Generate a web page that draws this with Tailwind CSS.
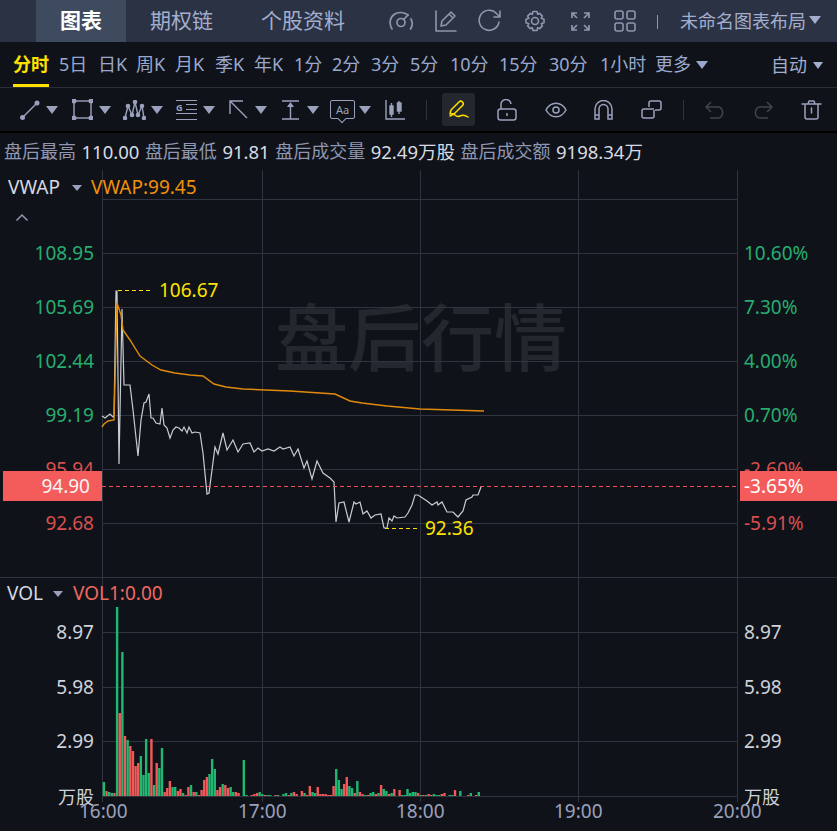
<!DOCTYPE html>
<html lang="zh">
<head>
  <meta charset="UTF-8">
  <title>分时图</title>
  <script src="https://cdn.jsdelivr.net/npm/@tailwindcss/browser@4"></script>
</head>
<body class="w-[837px] h-[831px] overflow-hidden bg-[#0f1319] text-[18px] font-['Noto_Sans','Noto_Sans_CJK_SC',sans-serif]">
  <!-- top tabs -->
  <header class="h-[42px] bg-[#2b3244] flex items-center pl-[36px] text-[#a3aecd] text-[21px]">
    <div class="w-[90px] h-full bg-[#3e4b5f] flex items-center justify-center font-bold text-white">图表</div>
    <div class="ml-[24px] w-[63px] whitespace-nowrap">期权链</div>
    <div class="ml-[48px] w-[84px] whitespace-nowrap">个股资料</div>
    <div class="ml-[43px] flex items-center text-[#8d96ae]">
      <svg width="26" height="20" viewBox="0 0 26 20" fill="none" stroke="currentColor" stroke-width="1.7" stroke-linecap="round"><path d="M4 18C1 13 1.5 7 6 3.5 10 .5 16 1 20 4M23 8c1.800 3.500 1.500 7-.5 10"/><circle cx="13" cy="11.500" r="4"/><path d="M15.500 8.500 20 4"/></svg>
      <svg class="ml-[20px]" width="24" height="24" viewBox="0 0 24 24" fill="none" stroke="currentColor" stroke-width="1.600" stroke-linecap="round" stroke-linejoin="round"><path d="M2 2v20h20"/><path d="M7 17l1-5L17 3l4 4-9 9-5 1zM15 5l4 4"/></svg>
      <svg class="ml-[20px]" width="24" height="24" viewBox="0 0 24 24" fill="none" stroke="currentColor" stroke-width="1.600" stroke-linecap="round" stroke-linejoin="round"><path d="M21 13a10 10 0 1 1-2.500-8.500L22 8M22 2v6h-6" /></svg>
      <svg class="ml-[22px]" width="22" height="22" viewBox="0 0 22 22" fill="none" stroke="currentColor" stroke-width="1.600" stroke-linejoin="round"><path d="M9 1.500h4l.7 2.800 2-.9 2.700 2.700-1.200 2.200 2.800 1v3.400l-2.800 1 1.200 2.200-2.700 2.700-2-.9-.7 2.800H9l-.7-2.800-2 .9-2.700-2.700 1.200-2.200-2.800-1V9.300l2.800-1-1.200-2.200 2.700-2.700 2 .9z"/><circle cx="11" cy="11" r="3.500"/></svg>
      <svg class="ml-[25px]" width="19" height="19" viewBox="0 0 19 19" fill="none" stroke="currentColor" stroke-width="1.700"><path d="M1 6V1h5M1 1l5 5M13 1h5v5M18 1l-5 5M1 13v5h5M1 18l5-5M18 13v5h-5M18 18l-5-5"/></svg>
      <svg class="ml-[24px]" width="22" height="22" viewBox="0 0 22 22" fill="none" stroke="currentColor" stroke-width="1.600"><rect x="1" y="1" width="8" height="8" rx="2"/><rect x="13" y="1" width="8" height="8" rx="2"/><rect x="1" y="13" width="8" height="8" rx="2"/><rect x="13" y="13" width="8" height="8" rx="2"/></svg>
    </div>
    <div class="ml-[21px] w-px h-[14px] bg-[#8d96ae] mt-[1px]"></div>
    <div class="ml-[22px] text-[18px] whitespace-nowrap">未命名图表布局</div>
    <div class="ml-[3px] mt-[-2px] w-0 h-0 border-x-[6px] border-x-transparent border-t-[8px] border-t-[#a3aecd]"></div>
  </header>

  <!-- period row -->
  <nav class="h-[46px] pl-[13px] pr-[14px] flex items-center border-b border-[#2a2e36] text-[#9aa8cf] whitespace-nowrap">
    <div class="relative h-full w-[36px] flex items-center font-bold text-[#ffe100]">分时<div class="absolute left-0 right-0 bottom-0 h-[3px] bg-[#ffe100]"></div></div>
    <div class="ml-[10px] w-[29px]">5日</div>
    <div class="ml-[10px] w-[28px]">日K</div>
    <div class="ml-[10px] w-[29px]">周K</div>
    <div class="ml-[10px] w-[29px]">月K</div>
    <div class="ml-[11px] w-[29px]">季K</div>
    <div class="ml-[10px] w-[29px]">年K</div>
    <div class="ml-[11px] w-[28px]">1分</div>
    <div class="ml-[10px] w-[29px]">2分</div>
    <div class="ml-[10px] w-[29px]">3分</div>
    <div class="ml-[10px] w-[29px]">5分</div>
    <div class="ml-[11px] w-[39px]">10分</div>
    <div class="ml-[10px] w-[39px]">15分</div>
    <div class="ml-[11px] w-[39px]">30分</div>
    <div class="ml-[12px] w-[45px]">1小时</div>
    <div class="ml-[10px] w-[36px]">更多</div>
    <div class="ml-[5px] w-0 h-0 border-x-[6.500px] border-x-transparent border-t-[8px] border-t-[#9aa8cf]"></div>
    <div class="ml-auto mt-[2px] flex items-center text-[#a3aecd]">自动<div class="ml-[6px] w-0 h-0 border-x-[5px] border-x-transparent border-t-[7px] border-t-[#a3aecd]"></div></div>
  </nav>

  <!-- drawing tools -->
  <div class="h-[43px] flex items-center pl-[20px] text-[#9ba1bd]">
    <svg width="20" height="20" viewBox="0 0 20 20" fill="none" stroke="currentColor" stroke-width="1.400"><path d="M3 17 17 3"/><circle cx="2.500" cy="17.500" r="1.800" fill="currentColor"/><circle cx="17" cy="3" r="1.800" fill="currentColor"/></svg>
    <div class="ml-[6px] w-0 h-0 border-x-[6px] border-x-transparent border-t-[8px] border-t-[#9ba1bd]"></div>
    <svg class="ml-[14px]" width="21" height="21" viewBox="0 0 21 21" fill="none" stroke="currentColor" stroke-width="1.400"><rect x="2" y="2" width="17" height="17"/><g fill="currentColor"><circle cx="2" cy="2" r="1.800"/><circle cx="19" cy="2" r="1.800"/><circle cx="2" cy="19" r="1.800"/><circle cx="19" cy="19" r="1.800"/></g></svg>
    <div class="ml-[6px] w-0 h-0 border-x-[6px] border-x-transparent border-t-[8px] border-t-[#9ba1bd]"></div>
    <svg class="ml-[12px]" width="23" height="20" viewBox="0 0 23 20" fill="none" stroke="currentColor" stroke-width="1.400"><path d="M2 18 5 6l4 9 3-13 3 13 4-9 2 12"/><g fill="currentColor"><circle cx="2" cy="18" r="1.600"/><circle cx="5" cy="6" r="1.600"/><circle cx="9" cy="15" r="1.600"/><circle cx="12" cy="2" r="1.600"/><circle cx="15" cy="15" r="1.600"/><circle cx="19" cy="6" r="1.600"/><circle cx="21" cy="18" r="1.600"/></g></svg>
    <div class="ml-[5px] w-0 h-0 border-x-[6px] border-x-transparent border-t-[8px] border-t-[#9ba1bd]"></div>
    <div class="ml-[13px] w-[21px] h-[20px] relative border-y-[1.500px] border-[#9ba1bd]">
      <div class="absolute left-0 top-[12px] w-full h-[1.500px] bg-[#9ba1bd]"></div>
      <div class="absolute right-0 top-[3px] w-[11px] h-[1.500px] bg-[#9ba1bd]"></div>
      <div class="absolute right-0 top-[8px] w-[11px] h-[1.500px] bg-[#9ba1bd]"></div>
      <div class="absolute left-0 top-[1px] text-[9px] leading-[11px] font-bold">G</div>
    </div>
    <div class="ml-[6px] w-0 h-0 border-x-[6px] border-x-transparent border-t-[8px] border-t-[#9ba1bd]"></div>
    <svg class="ml-[14px]" width="19" height="19" viewBox="0 0 19 19" fill="none" stroke="currentColor" stroke-width="1.400"><path d="M1 14V1h13M1 1l17 17"/></svg>
    <div class="ml-[7px] w-0 h-0 border-x-[6px] border-x-transparent border-t-[8px] border-t-[#9ba1bd]"></div>
    <svg class="ml-[14px]" width="19" height="20" viewBox="0 0 19 20" fill="none" stroke="currentColor" stroke-width="1.400"><path d="M1 1h17M1 19h17M9.500 5v14"/><path d="M9.500 2 13 7H6z" fill="currentColor" stroke="none"/></svg>
    <div class="ml-[7px] w-0 h-0 border-x-[6px] border-x-transparent border-t-[8px] border-t-[#9ba1bd]"></div>
    <div class="ml-[11px] relative w-[25px] h-[19px] border-[1.400px] border-[#9ba1bd] rounded-[2px] flex items-center justify-center text-[11px] leading-none">Aa<div class="absolute left-[8px] bottom-[-4px] w-[6px] h-[6px] rotate-45 bg-[#0f1319] border-r-[1.400px] border-b-[1.400px] border-[#9ba1bd]"></div></div>
    <div class="ml-[4px] w-0 h-0 border-x-[6px] border-x-transparent border-t-[8px] border-t-[#9ba1bd]"></div>
    <svg class="ml-[14px]" width="20" height="20" viewBox="0 0 20 20" fill="none" stroke="currentColor" stroke-width="1.400"><path d="M1 0v19h19"/><rect x="5" y="6" width="3" height="8" fill="currentColor"/><path d="M6.500 3v14M14 1v13"/><rect x="12.500" y="3" width="3.500" height="8" fill="currentColor"/></svg>
    <div class="ml-[21px] w-px h-[20px] bg-[#2f333b]"></div>
    <div class="ml-[15px] w-[33px] h-[33px] rounded-[3px] bg-[#24272d] flex items-center justify-center text-[#ffe100]">
      <svg width="22" height="20" viewBox="0 0 22 20" fill="none" stroke="currentColor" stroke-width="1.500" stroke-linecap="round" stroke-linejoin="round"><path d="M2 14 3 10l8-8c1-1 2.500-1 3.500 0s1 2.500 0 3.500L6.500 13.500z"/><path d="M2 16c2-1 4-2 5-1s3 2 5 1 5-1 8 1"/></svg>
    </div>
    <svg class="ml-[22px]" width="20" height="22" viewBox="0 0 20 22" fill="none" stroke="currentColor" stroke-width="1.500"><path d="M4 10V6a5 5 0 0 1 10-1"/><rect x="1" y="10" width="18" height="11" rx="2.500"/><path d="M10 14v3"/></svg>
    <svg class="ml-[28px]" width="22" height="16" viewBox="0 0 22 16" fill="none" stroke="currentColor" stroke-width="1.500"><path d="M1 8c5-9 15-9 20 0-5 9-15 9-20 0z"/><circle cx="11" cy="8" r="3"/></svg>
    <svg class="ml-[27px]" width="19" height="20" viewBox="0 0 19 20" fill="none" stroke="currentColor" stroke-width="1.500"><path d="M1 19V9a8.500 8.500 0 0 1 17 0v10h-4V9a4.500 4.500 0 0 0-9 0v10zM1 15h4M14 15h4"/></svg>
    <svg class="ml-[28px]" width="21" height="20" viewBox="0 0 21 20" fill="none" stroke="currentColor" stroke-width="1.500"><path d="M8 7V3a2 2 0 0 1 2-2h8a2 2 0 0 1 2 2v5a2 2 0 0 1-2 2h-4"/><path d="M13 10v6a2 2 0 0 1-2 2H3a2 2 0 0 1-2-2v-5a2 2 0 0 1 2-2h4"/><path d="M7 9h6"/></svg>
    <div class="ml-[21px] w-px h-[20px] bg-[#2f333b]"></div>
    <svg class="ml-[21px] text-[#3f444d]" width="21" height="18" viewBox="0 0 21 18" fill="none" stroke="currentColor" stroke-width="1.500"><path d="M6 1 1 6l5 5M1 6h13a6 6 0 0 1 0 11H5"/></svg>
    <svg class="ml-[26px] text-[#3f444d]" width="21" height="18" viewBox="0 0 21 18" fill="none" stroke="currentColor" stroke-width="1.500"><path d="m15 1 5 5-5 5M20 6H7a6 6 0 0 0 0 11h9"/></svg>
    <svg class="ml-[28px]" width="21" height="20" viewBox="0 0 21 20" fill="none" stroke="currentColor" stroke-width="1.500" stroke-linecap="round" stroke-linejoin="round"><path d="M1 4h19M7 4l1-3h5l1 3M4 4v13a2 2 0 0 0 2 2h9a2 2 0 0 0 2-2V4M10.500 8v5"/></svg>
  </div>
  <div class="h-[2px] bg-black"></div>

  <!-- after-hours summary -->
  <div class="h-[37px] pl-[4px] flex items-center whitespace-nowrap text-[#8f97b3]">
    <span>盘后最高</span><span class="ml-[5.500px] text-[18.500px] text-[#d9dbe2]">110.00</span>
    <span class="ml-[5.500px]">盘后最低</span><span class="ml-[5.500px] text-[18.500px] text-[#d9dbe2]">91.81</span>
    <span class="ml-[5.500px]">盘后成交量</span><span class="ml-[5.500px] text-[18.500px] text-[#d9dbe2]">92.49万股</span>
    <span class="ml-[5.500px]">盘后成交额</span><span class="ml-[5.500px] text-[18.500px] text-[#d9dbe2]">9198.34万</span>
  </div>

  <!-- chart canvas -->
  <div class="relative h-[661px] leading-none whitespace-nowrap text-[19px]">
    <div class="absolute left-[275px] top-[130px] text-[73px] font-medium text-[#24272d]">盘后行情</div>
    <svg id="chart" class="absolute inset-0" width="837" height="661" viewBox="0 170 837 661" fill="none"></svg>

    <div class="absolute left-[8px] top-[7px] text-[#d5d8e0] h-[20px] leading-[20px]">VWAP</div>
    <div class="absolute left-[72px] top-[15px] w-0 h-0 border-x-[5px] border-x-transparent border-t-[6px] border-t-[#9ba1bd]"></div>
    <div class="absolute left-[91px] top-[7px] text-[#f0900a] h-[20px] leading-[20px]">VWAP:99.45</div>
    <svg class="absolute left-[15px] top-[43px] text-[#8f97b3]" width="14" height="9" viewBox="0 0 14 9" fill="none" stroke="currentColor" stroke-width="1.500"><path d="m1.500 7.500 5.500-5.500 5.500 5.500"/></svg>

    <div class="absolute right-[743px] top-[73px] h-[20px] leading-[20px] text-[#27ad70]">108.95</div>
    <div class="absolute right-[743px] top-[127px] h-[20px] leading-[20px] text-[#27ad70]">105.69</div>
    <div class="absolute right-[743px] top-[181px] h-[20px] leading-[20px] text-[#27ad70]">102.44</div>
    <div class="absolute right-[743px] top-[235px] h-[20px] leading-[20px] text-[#27ad70]">99.19</div>
    <div class="absolute right-[743px] top-[289px] h-[20px] leading-[20px] text-[#d94f4f]">95.94</div>
    <div class="absolute right-[743px] top-[343px] h-[20px] leading-[20px] text-[#d94f4f]">92.68</div>

    <div class="absolute left-[744px] top-[73px] h-[20px] leading-[20px] text-[#27ad70]">10.60%</div>
    <div class="absolute left-[744px] top-[127px] h-[20px] leading-[20px] text-[#27ad70]">7.30%</div>
    <div class="absolute left-[744px] top-[181px] h-[20px] leading-[20px] text-[#27ad70]">4.00%</div>
    <div class="absolute left-[744px] top-[235px] h-[20px] leading-[20px] text-[#27ad70]">0.70%</div>
    <div class="absolute left-[744px] top-[289px] h-[20px] leading-[20px] text-[#d94f4f]">-2.60%</div>
    <div class="absolute left-[744px] top-[343px] h-[20px] leading-[20px] text-[#d94f4f]">-5.91%</div>

    <div class="absolute left-[3px] top-[301px] w-[99px] h-[30px] bg-[#f45b5b] text-[#f4f4f4] flex items-center justify-end pr-[12px]">94.90</div>
    <div class="absolute left-[740px] top-[301px] w-[97px] h-[30px] bg-[#f45b5b] text-white flex items-center pl-[4px]">-3.65%</div>

    <div class="absolute left-[159px] top-[110px] h-[20px] leading-[20px] text-[#ffe100]">106.67</div>
    <div class="absolute left-[425px] top-[348px] h-[20px] leading-[20px] text-[#ffe100]">92.36</div>

    <div class="absolute left-[7px] top-[413px] h-[20px] leading-[20px] text-[#d5d8e0]">VOL</div>
    <div class="absolute left-[53px] top-[421px] w-0 h-0 border-x-[5px] border-x-transparent border-t-[6px] border-t-[#9ba1bd]"></div>
    <div class="absolute left-[73px] top-[413px] h-[20px] leading-[20px] text-[#f0685f]">VOL1:0.00</div>

    <div class="absolute right-[743px] top-[452px] h-[20px] leading-[20px] text-[#cfd2da]">8.97</div>
    <div class="absolute right-[743px] top-[507px] h-[20px] leading-[20px] text-[#cfd2da]">5.98</div>
    <div class="absolute right-[743px] top-[561px] h-[20px] leading-[20px] text-[#cfd2da]">2.99</div>
    <div class="absolute right-[743px] top-[617px] h-[20px] leading-[20px] text-[18px] text-[#cfd2da]">万股</div>
    <div class="absolute left-[744px] top-[452px] h-[20px] leading-[20px] text-[#cfd2da]">8.97</div>
    <div class="absolute left-[744px] top-[507px] h-[20px] leading-[20px] text-[#cfd2da]">5.98</div>
    <div class="absolute left-[744px] top-[561px] h-[20px] leading-[20px] text-[#cfd2da]">2.99</div>
    <div class="absolute left-[744px] top-[617px] h-[20px] leading-[20px] text-[18px] text-[#cfd2da]">万股</div>

    <div class="absolute left-[79px] top-[631px] h-[20px] leading-[20px] text-[#9ba1bd]">16:00</div>
    <div class="absolute left-[238px] top-[631px] h-[20px] leading-[20px] text-[#9ba1bd]">17:00</div>
    <div class="absolute left-[396px] top-[631px] h-[20px] leading-[20px] text-[#9ba1bd]">18:00</div>
    <div class="absolute left-[554px] top-[631px] h-[20px] leading-[20px] text-[#9ba1bd]">19:00</div>
    <div class="absolute left-[713px] top-[631px] h-[20px] leading-[20px] text-[#9ba1bd]">20:00</div>
  </div>

  <script>
    // series read off the chart, pixel coordinates
    const price = [102,416,105,418,110,414,113,417,114,416,116,291,117,291,119,464,122,309,124,385,130,385,133,410,138,456,141,420,144,403,146,402,149,394,151,418,153,418,156,423,160,424,162,408,164,425,167,428,170,438,173,430,176,427,179,428,182,431,184,427,187,433,189,427,192,433,195,432,200,433,203,453,207,494,209,493,215,447,218,454,223,433,227,450,233,440,238,452,243,444,250,443,254,452,258,448,262,451,268,449,274,451,280,447,283,449,290,447,294,456,298,449,304,468,307,461,312,479,317,461,323,473,330,478,334,482,336,522,339,503,344,502,349,522,354,502,356,504,360,502,363,514,367,511,371,518,375,515,381,514,384,528,387,528,389,518,392,521,394,516,397,518,405,517,408,513,412,505,415,495,418,495,427,501,432,505,437,502,438,505,442,502,447,512,453,512,458,517,463,511,466,500,472,497,473,495,478,495,481,487];
    const vwap = [102,427,104,424,108,421,114,420,117,303,121,315,123,330,130,340,140,356,148,362,152,365,161,370,175,373,190,375,203,376,214,384,226,387,243,389,290,391,335,394,350,401,362,403,387,406,420,409,484,411];
    // volume per minute, negative = red bar
    const vol = [14,-5,4,3,-3,189,-83,144,-60,56,-50,-45,-30,-33,40,21,57,23,-57,11,-33,28,48,-4,-8,-15,9,9,-5,-7,3,-1,-9,11,-4,4,-1,-6,-16,-19,22,37,27,-6,-9,12,-11,-8,9,4,-4,-3,0,36,1,0,-1,-2,-3,4,2,-1,1,1,0,-1,1,0,2,3,-1,3,-4,-2,0,-5,3,-1,-10,4,3,-9,-2,-2,-2,-1,-1,-10,27,16,7,-12,-19,10,8,-3,15,-4,-2,1,-1,3,4,-2,3,-11,7,5,-2,3,-7,0,-6,1,1,7,3,4,4,-3,1,-1,1,-2,-1,2,1,1,-2,-3,0,1,1,-6,0,5,0,0,-1,3,0,-1,4];

    const svg = document.getElementById('chart');
    let html = '';
    const line = (x1, y1, x2, y2, c, extra = '') => `<line x1="${x1}" y1="${y1}" x2="${x2}" y2="${y2}" stroke="${c}" ${extra}/>`;
    for (const y of [199.5, 253.5, 307.5, 361.5, 415.5, 469.5, 523.5, 632.5, 687.5, 741.5, 796.5]) html += line(102, y, 737, y, '#2e3540');
    for (const x of [102.5, 262.5, 420.5, 578.5, 737.5]) html += line(x, 170, x, 802, '#2e3540');
    html += line(0, 577.5, 837, 577.5, '#2e3540');
    vol.forEach((v, i) => {
      if (!v) return;
      const h = Math.abs(v);
      html += `<rect x="${(102.7 + i * 2.64).toFixed(2)}" y="${796 - h}" width="2.4" height="${h}" fill="${v > 0 ? '#1fb873' : '#f25858'}"/>`;
    });
    const pts = a => a.map((n, i) => n + (i % 2 ? ' ' : ',')).join('');
    html += `<polyline points="${pts(price)}" stroke="#c9ccd2" stroke-width="1.2"/>`;
    html += `<polyline points="${pts(vwap)}" stroke="#e08a0c" stroke-width="1.4"/>`;
    html += line(102, 486.5, 737, 486.5, '#f25050', 'stroke-dasharray="4 3"');
    html += line(118, 290.5, 152, 290.5, '#ffe100', 'stroke-dasharray="4 3"');
    html += line(385, 528.5, 419, 528.5, '#ffe100', 'stroke-dasharray="4 3"');
    svg.innerHTML = html;
  </script>
</body>
</html>
